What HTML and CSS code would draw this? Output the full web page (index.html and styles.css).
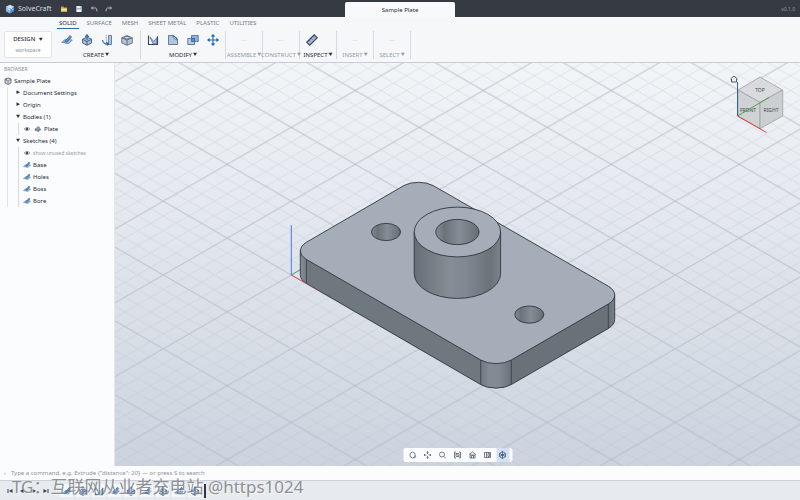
FILE: index.html
```html
<!DOCTYPE html>
<html lang="en">
<head>
<meta charset="utf-8">
<title>SolveCraft</title>
<link rel="stylesheet" href="styles.css">
</head>
<body>
<svg class="defs" aria-hidden="true">
  <symbol id="logo" viewBox="0 0 16 16"><path d="M8 1l6.500 3.500v7L8 15l-6.500-3.500v-7z" fill="#4d8fd6"/><path d="M8 1l6.500 3.500L8 8 1.500 4.500z" fill="#c5def6"/><path d="M1.500 4.500L8 8v7l-6.500-3.500z" fill="#88b9ea"/><path d="M4 7l5 3M8 4l4 5" stroke="#eaf4ff" stroke-width="1.500"/></symbol>
  <symbol id="folder" viewBox="0 0 16 16"><path d="M2 3h5l1 2h6v8H2z" fill="#c2a24e"/><path d="M2 7h12v6H2z" fill="#f1d986"/></symbol>
  <symbol id="save" viewBox="0 0 16 16"><path d="M2 2h11l1 1v11H2z" fill="#9fb0cb"/><path d="M4 2h7v4H4z" fill="#e9eef6"/><path d="M4 9h8v5H4z" fill="#f4f7fb"/></symbol>
  <symbol id="undo" viewBox="0 0 16 16"><path d="M6 3L3 6l3 3M3 6h8q3 0 3 7" class="line"/></symbol>
  <symbol id="redo" viewBox="0 0 16 16"><path d="M10 3l3 3-3 3M13 6H5q-3 0-3 7" class="line"/></symbol>
  <symbol id="sketch" viewBox="0 0 16 16"><path d="M1 11l5-4 9 1-5 5z" fill="#9dbbe0" stroke="#4d78a8"/><path d="M5 10l7-8 2 2-6 7z" fill="#5c8dc4" stroke="#3b689a"/></symbol>
  <symbol id="extrude" viewBox="0 0 16 16"><path d="M2 7l6-3 6 3v5l-6 3-6-3z" fill="#a7bddb" stroke="#34445b"/><path d="M2 7l6 3 6-3M8 10v5" fill="none" stroke="#34445b"/><path d="M8 8V2M5.500 4L8 1l2.500 3" fill="none" stroke="#2468ad" stroke-width="1.500"/></symbol>
  <symbol id="revolve" viewBox="0 0 16 16"><path d="M10 2h4v12h-4z" fill="#b1c6e1" stroke="#4a617e"/><path d="M7 1v14" stroke="#6c7a8d" stroke-dasharray="2 1"/><path d="M2 8c0 5 5 6 8 5M7 11l3 2-2 2" fill="none" stroke="#2468ad" stroke-width="1.500"/></symbol>
  <symbol id="box" viewBox="0 0 16 16"><path d="M1 5l7-3 7 3v7l-7 3-7-3z" fill="#b7c4d6" stroke="#46566d"/><path d="M1 5l7 3 7-3M8 8v7" fill="none" stroke="#46566d"/><ellipse cx="8" cy="5" rx="3" ry="1.500" fill="#f5f8fc" stroke="#46566d"/></symbol>
  <symbol id="press" viewBox="0 0 16 16"><path d="M2 2v12h12V3" fill="none" stroke="#35455d" stroke-width="1.500"/><path d="M4 4l4 9h5V5l-4 5z" fill="#a9bfdd" stroke="#3c6ba0"/></symbol>
  <symbol id="fillet" viewBox="0 0 16 16"><path d="M2 2h6c0 4 2 5 6 6v6H2z" fill="#b1c5e0" stroke="#3d5c85"/><path d="M8 2c1 1 5 2 6 6" fill="none" stroke="#2468ad" stroke-width="1.500"/></symbol>
  <symbol id="combine" viewBox="0 0 16 16"><path d="M6 2h9v8H6z" fill="#8eafe0" stroke="#3568a5"/><path d="M1 6h9v8H1z" fill="#b5cae6" stroke="#3d5c85"/><path d="M6 6h4v4H6z" fill="#5c8dc4" stroke="#35618f"/></symbol>
  <symbol id="move" viewBox="0 0 16 16"><path d="M8 1v14M1 8h14M6 3.500L8 1l2 2.500M6 12.500L8 15l2-2.500M3.500 6L1 8l2.500 2M12.500 6L15 8l-2.500 2" fill="none" stroke="#2468ad" stroke-width="1.500"/></symbol>
  <symbol id="measure" viewBox="0 0 16 16"><path d="M1 11L11 1l4 4L5 15z" fill="#a9bfdd" stroke="#35455d" stroke-width="1.500"/><path d="M4 8l2 2M6.500 5.500l2 2M9 3l2 2" stroke="#35455d"/></symbol>
  <symbol id="eye" viewBox="0 0 16 16"><path d="M2 8c3-4 9-4 12 0-3 4-9 4-12 0z" fill="none" stroke="#717985" stroke-width="1.500"/><circle cx="8" cy="8" r="2.500" fill="#3d4550"/></symbol>
  <symbol id="body" viewBox="0 0 16 16"><path d="M2 8l3-2 3-3 3 2v3l3 1-5 4-7-2z" fill="#98a3b2" stroke="#5c6675"/><path d="M2 8l7 2 5-2M9 10v3" fill="none" stroke="#5c6675"/></symbol>
  <symbol id="part" viewBox="0 0 16 16"><path d="M2 4l6-2 6 2v8l-6 3-6-3z" fill="#d2d8df" stroke="#46505c" stroke-width="1.500"/><path d="M2 5l6 3 6-3M8 8v6M5 3v4" fill="none" stroke="#46505c"/></symbol>
  <symbol id="orbit" viewBox="0 0 16 16"><path d="M8 2l5 3v6l-5 3-5-3V5z" class="line"/><path d="M10 14c3 0 5-2 5-5" class="line"/></symbol>
  <symbol id="pan" viewBox="0 0 16 16"><path d="M8 1v5M8 10v5M1 8h5M10 8h5M6 3l2-2 2 2M6 13l2 2 2-2M3 6L1 8l2 2M13 6l2 2-2 2" class="line"/></symbol>
  <symbol id="lens" viewBox="0 0 16 16"><circle cx="7" cy="7" r="5" class="line"/><path d="M11 11l4 4" class="line"/></symbol>
  <symbol id="fit" viewBox="0 0 16 16"><path d="M5 2H2v12h3M11 2h3v12h-3M5 5h6v6H5zM5 5l6 6" class="line"/></symbol>
  <symbol id="home" viewBox="0 0 16 16"><path d="M1 7l7-5 7 5M3 7v7h10V7M6 14V9h4v5M3 8h10" class="line"/></symbol>
  <symbol id="section" viewBox="0 0 16 16"><path d="M2 3h12v10H2zM6 3v10M9 5v6h3V5z" class="line"/></symbol>
  <symbol id="grid" viewBox="0 0 16 16"><path d="M8 1l6 4v6l-6 4-6-4V5zM8 1v14M2 5l12 6M14 5L2 11" class="line"/></symbol>
  <symbol id="first" viewBox="0 0 16 16"><path d="M3 4h2v8H3zM13 4v8L6 8z"/></symbol>
  <symbol id="prev" viewBox="0 0 16 16"><path d="M11 4v8L4 8z"/></symbol>
  <symbol id="next" viewBox="0 0 16 16"><path d="M5 4v8l7-4z"/></symbol>
  <symbol id="last" viewBox="0 0 16 16"><path d="M11 4h2v8h-2zM3 4v8l7-4z"/></symbol>
</svg>

<div class="app">
  <header class="titlebar">
    <div class="brand"><svg class="i10"><use href="#logo"/></svg><span>SolveCraft</span></div>
    <div class="quick">
      <button aria-label="Open"><svg class="i8"><use href="#folder"/></svg></button>
      <button aria-label="Save"><svg class="i8"><use href="#save"/></svg></button>
      <button aria-label="Undo"><svg class="i8"><use href="#undo"/></svg></button>
      <button aria-label="Redo"><svg class="i8"><use href="#redo"/></svg></button>
    </div>
    <button class="doc">Sample Plate</button>
    <span class="version">v0.1.0</span>
  </header>

  <section class="ribbon">
    <nav class="tabs">
      <button class="on">SOLID</button><button>SURFACE</button><button>MESH</button><button>SHEET METAL</button><button>PLASTIC</button><button>UTILITIES</button>
    </nav>
    <div class="tools">
      <button class="workspace"><b>DESIGN <i>▼</i></b><small>workspace</small></button>
      <div class="group wide">
        <div class="icons">
          <button aria-label="Sketch"><svg class="i12"><use href="#sketch"/></svg></button>
          <button aria-label="Extrude"><svg class="i12"><use href="#extrude"/></svg></button>
          <button aria-label="Revolve"><svg class="i12"><use href="#revolve"/></svg></button>
          <button aria-label="Box"><svg class="i12"><use href="#box"/></svg></button>
        </div>
        <button class="label">CREATE <i>▼</i></button>
      </div>
      <div class="group wide">
        <div class="icons">
          <button aria-label="Press pull"><svg class="i12"><use href="#press"/></svg></button>
          <button aria-label="Fillet"><svg class="i12"><use href="#fillet"/></svg></button>
          <button aria-label="Combine"><svg class="i12"><use href="#combine"/></svg></button>
          <button aria-label="Move"><svg class="i12"><use href="#move"/></svg></button>
        </div>
        <button class="label">MODIFY <i>▼</i></button>
      </div>
      <div class="group off"><div class="icons">—</div><button class="label">ASSEMBLE <i>▼</i></button></div>
      <div class="group off"><div class="icons">—</div><button class="label">CONSTRUCT <i>▼</i></button></div>
      <div class="group"><div class="icons start"><button aria-label="Measure"><svg class="i12"><use href="#measure"/></svg></button></div><button class="label">INSPECT <i>▼</i></button></div>
      <div class="group off"><div class="icons">—</div><button class="label">INSERT <i>▼</i></button></div>
      <div class="group off"><div class="icons">—</div><button class="label">SELECT <i>▼</i></button></div>
    </div>
  </section>

  <main class="work">
    <aside class="browser">
      <h2>BROWSER</h2>
      <div class="row root"><svg class="i8"><use href="#part"/></svg>Sample Plate</div>
      <div class="tree">
        <div class="row"><i>▶</i>Document Settings</div>
        <div class="row"><i>▶</i>Origin</div>
        <div class="row"><i>▼</i>Bodies (1)</div>
        <div class="kids">
          <div class="row"><svg class="i8"><use href="#eye"/></svg><svg class="i8 gap"><use href="#body"/></svg>Plate</div>
        </div>
        <div class="row"><i>▼</i>Sketches (4)</div>
        <div class="kids">
          <div class="row muted"><svg class="i8"><use href="#eye"/></svg>show unused sketches</div>
          <div class="row"><svg class="i8"><use href="#sketch"/></svg>Base</div>
          <div class="row"><svg class="i8"><use href="#sketch"/></svg>Holes</div>
          <div class="row"><svg class="i8"><use href="#sketch"/></svg>Boss</div>
          <div class="row"><svg class="i8"><use href="#sketch"/></svg>Bore</div>
        </div>
      </div>
    </aside>

    <div class="viewport">
      <svg class="scene" viewBox="115 63 685 403" preserveAspectRatio="xMidYMid slice">
        <defs>
          <pattern id="minor" patternUnits="userSpaceOnUse" x="291.300" y="275" width="25.600" height="14.760"><path d="M0 0L25.600 14.760M0 14.760L25.600 0" stroke="#878f9c" stroke-opacity=".24" stroke-width=".7"/></pattern>
          <pattern id="major" patternUnits="userSpaceOnUse" x="291.300" y="275" width="128" height="73.800"><path d="M0 0L128 73.800M0 73.800L128 0" stroke="#747b87" stroke-opacity=".42" stroke-width=".8"/></pattern>
          <linearGradient id="fade" x1="0" y1="0" x2="0" y2="1"><stop offset="0" stop-color="#fff"/><stop offset="1" stop-color="#888"/></linearGradient>
          <mask id="depth"><path d="M115 63h685v403H115z" fill="url(#fade)"/></mask>
          <linearGradient id="side" gradientUnits="userSpaceOnUse" x1="300" y1="0" x2="615" y2="0">
            <stop offset="0" stop-color="#8a929b"/><stop offset=".022" stop-color="#6f777f"/><stop offset=".573" stop-color="#6f777f"/><stop offset=".6" stop-color="#828a93"/><stop offset=".63" stop-color="#828a93"/><stop offset=".672" stop-color="#6a7179"/><stop offset=".98" stop-color="#6a7179"/><stop offset="1" stop-color="#7b838c"/>
          </linearGradient>
          <linearGradient id="boss"><stop offset="0" stop-color="#656d75"/><stop offset=".12" stop-color="#6f777f"/><stop offset=".42" stop-color="#858d96"/><stop offset=".6" stop-color="#7f8790"/><stop offset=".88" stop-color="#6a727a"/><stop offset="1" stop-color="#7a828b"/></linearGradient>
          <linearGradient id="bore"><stop offset="0" stop-color="#858d96"/><stop offset=".2" stop-color="#6a727a"/><stop offset=".55" stop-color="#848c95"/><stop offset=".85" stop-color="#707880"/><stop offset="1" stop-color="#656d75"/></linearGradient>
        </defs>
        <path d="M115 63h685v403H115z" fill="url(#minor)" mask="url(#depth)"/>
        <path d="M115 63h685v403H115z" fill="url(#major)" mask="url(#depth)"/>
        <path d="M291.300 275V225" stroke="#5475ef"/>
        <path d="M291.300 275l10-6" stroke="#4da45c"/>
        <g stroke="#2e353d" stroke-width=".9" stroke-linejoin="round">
          <path d="M300.300 250.800v24Q300.300 280 306.500 283.500L480.700 384.500A21.700 12.500 0 0 0 511.300 384.500L608.300 328.500Q614.700 324.500 614.700 319.500v-24z" fill="url(#side)"/>
          <path d="M306.500 259.500L480.700 360A21.700 12.500 0 0 0 511.300 360L608.300 304A21.700 12.500 0 0 0 608.300 286.200L433 185.500A21.700 12.500 0 0 0 404 185.500L306.500 242.200A21.700 12.500 0 0 0 306.500 259.500z" fill="#a5adb9"/>
          <path d="M306.500 259.500v24M480.700 360v24.500M511.300 360v24.500M608.300 304v24.500" stroke-width=".7"/>
          <ellipse cx="386" cy="232" rx="14.500" ry="8.600" fill="url(#bore)"/>
          <ellipse cx="529.300" cy="314.600" rx="14.500" ry="8.600" fill="url(#bore)"/>
          <path d="M414.200 232v41.500a43.200 24.900 0 0 0 86.400 0V232z" fill="url(#boss)"/>
          <ellipse cx="457.400" cy="232" rx="43.200" ry="24.900" fill="#a5adb9"/>
          <ellipse cx="457.400" cy="232" rx="21.600" ry="12.600" fill="url(#bore)"/>
        </g>
        <path d="M291.300 275l14 8" stroke="#e0484c"/><path d="M305 283l18 10.400" stroke="#d05256" stroke-opacity=".4"/>
      </svg>

      <svg class="cube" viewBox="728 72 60 64" role="img" aria-label="View cube">
        <g stroke="#9da1a7" stroke-width=".8"><path d="M760 77l22.700 13L760 102.500 738 90z" fill="#d8dadd"/><path d="M738 90l22 12.500v26.200L738 116z" fill="#d0d2d5"/><path d="M760 102.500L782.700 90v26L760 128.700z" fill="#cccfd2"/></g>
        <path d="M737.500 116V82" stroke="#2e62b5"/>
        <text x="760" y="92">TOP</text><text x="748" y="112">FRONT</text><text x="771" y="112">RIGHT</text>
        <path d="M737.500 116l29 16.500" stroke="#d63c3c"/><path d="M737.500 116L769 97.500" stroke="#45a345"/>
        <path d="M730.500 79l3.500-3 3.500 3M731.500 79v3h5v-3" fill="none" stroke="#3f4752" stroke-width=".9"/>
      </svg>

      <div class="navbar">
        <button aria-label="Orbit"><svg class="i8"><use href="#orbit"/></svg></button>
        <button aria-label="Pan"><svg class="i8"><use href="#pan"/></svg></button>
        <button aria-label="Zoom"><svg class="i8"><use href="#lens"/></svg></button>
        <button aria-label="Fit"><svg class="i8"><use href="#fit"/></svg></button>
        <button aria-label="Home"><svg class="i8"><use href="#home"/></svg></button>
        <button aria-label="Section"><svg class="i8"><use href="#section"/></svg></button>
        <button class="on" aria-label="Grid"><svg class="i8"><use href="#grid"/></svg></button>
      </div>
    </div>
  </main>

  <label class="command"><span>›</span><input type="text" aria-label="Command" placeholder='Type a command, e.g. Extrude {"distance": 20} — or press S to search'></label>

  <footer class="timeline">
    <div class="play">
      <button aria-label="First"><svg class="i8"><use href="#first"/></svg></button>
      <button aria-label="Previous"><svg class="i8"><use href="#prev"/></svg></button>
      <button aria-label="Next"><svg class="i8"><use href="#next"/></svg></button>
      <button aria-label="Last"><svg class="i8"><use href="#last"/></svg></button>
    </div>
    <div class="steps">
      <button aria-label="Sketch 1"><svg class="i10"><use href="#sketch"/></svg></button>
      <button aria-label="Extrude 1"><svg class="i10"><use href="#extrude"/></svg></button>
      <button aria-label="Fillet 1"><svg class="i10"><use href="#press"/></svg></button>
      <button aria-label="Sketch 2"><svg class="i10"><use href="#sketch"/></svg></button>
      <button aria-label="Extrude 2"><svg class="i10"><use href="#extrude"/></svg></button>
      <button aria-label="Sketch 3"><svg class="i10"><use href="#sketch"/></svg></button>
      <button aria-label="Extrude 3"><svg class="i10"><use href="#extrude"/></svg></button>
      <button aria-label="Sketch 4"><svg class="i10"><use href="#sketch"/></svg></button>
      <button aria-label="Extrude 4"><svg class="i10"><use href="#extrude"/></svg></button>
      <span class="marker"></span>
    </div>
  </footer>
  <div class="watermark">TG：互联网从业者充电站 @https1024</div>
</div>
</body>
</html>
```
FILE: styles.css
```css
* { box-sizing: border-box; }
body {
  margin: 0;
  font: 6px/8px "Noto Sans", "Noto Sans CJK SC", sans-serif;
  color: #272d35;
}
button {
  display: flex;
  align-items: center;
  justify-content: center;
  padding: 0;
  border: 0;
  background: none;
  color: inherit;
  font: inherit;
  white-space: nowrap;
}
i { font-style: normal; font-size: 4px; }
svg { display: block; flex: none; }
.defs { position: absolute; width: 0; height: 0; }
.line { fill: none; stroke: currentColor; stroke-width: 1.5px; }
.i8 { width: 8px; height: 8px; }
.i10 { width: 10px; height: 10px; }
.i12 { width: 12px; height: 12px; }

.app {
  position: relative;
  display: flex;
  flex-direction: column;
  min-height: 100vh;
}

.titlebar {
  display: grid;
  grid-template-columns: 1fr 110px 1fr;
  height: 17px;
  align-items: center;
  padding: 0 5px;
  background: #353a43;
  color: #d8dce2;
}
.brand { display: flex; align-items: center; gap: 3px; grid-area: 1 / 1; font-size: 7px; }
.quick { display: flex; gap: 7px; grid-area: 1 / 1; margin-left: 55px; }
.doc {
  align-self: end;
  height: 15px;
  border-radius: 2px 2px 0 0;
  background: #f7f9fb;
  color: #272d35;
}
.version { justify-self: end; font-size: 5px; color: #969ca6; }

.ribbon { background: #f5f7f9; border-bottom: 1px solid #c8ced8; }
.tabs { display: flex; gap: 6px; padding-left: 57px; }
.tabs button {
  height: 12px;
  padding: 0 2px;
  border-bottom: 1px solid transparent;
  color: #747b86;
}
.tabs .on { border-color: #2d69a8; color: #272d35; }
.tools { display: flex; height: 33px; padding: 2px 4px 3px; }
.workspace {
  flex-direction: column;
  gap: 3px;
  width: 48px;
  height: 27px;
  border: 1px solid #e1e5ea;
  border-radius: 2px;
  background: #fff;
}
.workspace b { font-weight: 500; }
.workspace i { margin-left: 2px; }
.workspace small { font-size: 5px; line-height: 7px; color: #8b929c; }
.group {
  display: flex;
  flex-direction: column;
  align-items: center;
  justify-content: space-between;
  width: 37px;
  border-right: 1px solid #d5d9df;
}
.wide { width: 85px; }
.workspace + .wide { width: 89px; }
.icons { display: flex; align-items: center; gap: 8px; height: 18px; }
.workspace + .wide .icons { padding-left: 2px; }
.start { align-self: start; padding-left: 6px; }
.label { gap: 1px; }
.off { color: #969ca5; }
.off .icons { color: #d2d6dc; }

.work { display: flex; flex: 1; min-height: 300px; }
.browser {
  width: 115px;
  padding: 2px 0 0 4px;
  background: #fafcfe;
  border-right: 1px solid #e3e7ed;
}
.browser h2 { margin: 0 0 2px; font-size: 5px; line-height: 8px; font-weight: 400; color: #8a909a; }
.row { display: flex; align-items: center; gap: 2px; height: 12px; white-space: nowrap; }
.row i { width: 5px; }
.tree { margin-left: 3px; padding-left: 8px; border-left: 1px solid #dfe3e8; }
.kids { margin-left: 2px; padding-left: 4px; border-left: 1px solid #d6dae0; }
.gap { margin-left: 1px; }
.muted { font-size: 5px; color: #979da6; }

.viewport {
  position: relative;
  flex: 1;
  overflow: hidden;
  background: linear-gradient(#f2f5f8, #e3e7ee 40%, #ccd3de);
}
.scene { position: absolute; width: 100%; height: 100%; }
.cube { position: absolute; top: 9px; right: 12px; width: 60px; height: 64px; }
.cube text { font-size: 5px; text-anchor: middle; fill: #454b54; }
.navbar {
  position: absolute;
  bottom: 4px;
  left: 50%;
  display: flex;
  gap: 2px;
  padding: 0 3px;
  border-radius: 2px;
  background: #fbfcfe;
  color: #4b5666;
  transform: translateX(-50%);
}
.navbar button { width: 13px; height: 14px; }
.navbar .on { background: #d3e1f2; color: #2f517a; }

.command {
  display: flex;
  align-items: center;
  gap: 5px;
  height: 15px;
  padding: 0 4px;
  background: #fbfcfe;
  border-bottom: 1px solid #ccd1da;
  color: #8b929c;
}
.command input {
  flex: 1;
  padding: 0;
  border: 0;
  outline: 0;
  background: none;
  font: inherit;
}
.command input::placeholder { color: #8b929c; opacity: 1; }

.timeline {
  display: flex;
  align-items: center;
  gap: 10px;
  height: 19px;
  padding: 0 6px;
  background: #e7eaee;
}
.play { display: flex; gap: 4px; fill: #39414c; }
.steps { display: flex; align-items: center; gap: 3px; }
.steps button { width: 13px; height: 13px; background: #f5f8fb; }
.marker { width: 2px; height: 14px; background: #2d3745; }

.watermark {
  position: absolute;
  bottom: 1px;
  left: 12px;
  font-size: 17px;
  line-height: 24px;
  white-space: nowrap;
  color: rgb(115 119 124 / 80%);
  text-shadow: 1px 1px 0 rgb(255 255 255 / 60%);
  pointer-events: none;
}
```
